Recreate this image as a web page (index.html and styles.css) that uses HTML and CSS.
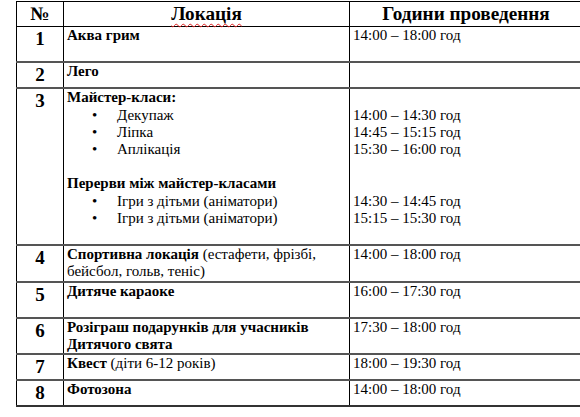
FILE: index.html
```html
<!DOCTYPE html>
<html lang="uk">
<head>
<meta charset="utf-8">
<title>Розклад локацій</title>
<link rel="stylesheet" href="styles.css">
</head>
<body>
<table class="sched">
  <colgroup>
    <col class="c-num">
    <col class="c-loc">
    <col class="c-time">
  </colgroup>
  <thead>
    <tr class="head">
      <th>№</th>
      <th><span class="spell">Локація</span></th>
      <th>Години проведення</th>
    </tr>
  </thead>
  <tbody>
    <tr>
      <td class="num">1</td>
      <td><div class="ln b">Аква грим</div><div class="ln">&nbsp;</div></td>
      <td><div class="ln">14:00 – 18:00 год</div></td>
    </tr>
    <tr>
      <td class="num">2</td>
      <td><div class="ln b">Лего</div></td>
      <td></td>
    </tr>
    <tr>
      <td class="num">3</td>
      <td>
        <div class="ln b">Майстер-класи:</div>
        <ul class="bul">
          <li class="ln">Декупаж</li>
          <li class="ln">Ліпка</li>
          <li class="ln">Аплікація</li>
        </ul>
        <div class="ln">&nbsp;</div>
        <div class="ln b">Перерви між майстер-класами</div>
        <ul class="bul">
          <li class="ln">Ігри з дітьми (аніматори)</li>
          <li class="ln">Ігри з дітьми (аніматори)</li>
        </ul>
        <div class="ln">&nbsp;</div>
      </td>
      <td>
        <div class="ln">&nbsp;</div>
        <div class="ln">14:00 – 14:30 год</div>
        <div class="ln">14:45 – 15:15 год</div>
        <div class="ln">15:30 – 16:00 год</div>
        <div class="ln">&nbsp;</div>
        <div class="ln">&nbsp;</div>
        <div class="ln">14:30 – 14:45 год</div>
        <div class="ln">15:15 – 15:30 год</div>
      </td>
    </tr>
    <tr>
      <td class="num">4</td>
      <td><div class="ln"><span class="b">Спортивна локація</span> (естафети, фрізбі,<br>бейсбол, гольв, теніс)</div></td>
      <td><div class="ln">14:00 – 18:00 год</div></td>
    </tr>
    <tr>
      <td class="num">5</td>
      <td><div class="ln b">Дитяче караоке</div><div class="ln">&nbsp;</div></td>
      <td><div class="ln">16:00 – 17:30 год</div></td>
    </tr>
    <tr>
      <td class="num">6</td>
      <td><div class="ln b">Розіграш подарунків для учасників<br>Дитячого свята</div></td>
      <td><div class="ln">17:30 – 18:00 год</div></td>
    </tr>
    <tr>
      <td class="num">7</td>
      <td><div class="ln"><span class="b">Квест</span> (діти 6-12 років)</div></td>
      <td><div class="ln">18:00 – 19:30 год</div></td>
    </tr>
    <tr>
      <td class="num">8</td>
      <td><div class="ln b">Фотозона</div></td>
      <td><div class="ln">14:00 – 18:00 год</div></td>
    </tr>
  </tbody>
</table>
</body>
</html>
```

FILE: styles.css
```css
html, body {
  margin: 0;
  padding: 0;
  background: #fff;
  overflow: hidden;
}
body {
  width: 580px;
  height: 417px;
  font-family: "Liberation Serif", "Times New Roman", serif;
  color: #000;
  font-size: 15px;
}
.sched {
  margin: 1px 0 0 16px;
  width: 566px;
  table-layout: fixed;
  border-collapse: collapse;
}
.c-num { width: 47px; }
.c-loc { width: 286px; }
.c-time { width: 233px; }

.sched th,
.sched td {
  padding: 0 3px;
  vertical-align: top;
  text-align: left;
  border-left: 1px solid #000;
  border-right: 1px solid #000;
}
.sched thead th {
  border-top: 1px solid #000;
  border-bottom: 1px solid #000;
  font-size: 19.2px;
  line-height: 24px;
  font-weight: bold;
  text-align: center;
}
.sched tbody td {
  border-bottom: 2px solid #555;
}
.sched tbody tr:last-child td {
  border-bottom: 2px solid #333;
}
.spell {
  text-decoration: underline wavy #e02020;
  text-decoration-thickness: 1px;
  text-underline-offset: 3px;
}
.num {
  font-size: 19px;
  font-weight: bold;
  line-height: 24px;
  text-align: center !important;
}
.ln {
  line-height: 17.2px;
}
.b {
  font-weight: bold;
}
.bul {
  list-style: none;
  margin: 0;
  padding: 0;
}
.bul li {
  padding-left: 25px;
}
.bul li::before {
  content: "•";
  display: inline-block;
  width: 25px;
}
```
